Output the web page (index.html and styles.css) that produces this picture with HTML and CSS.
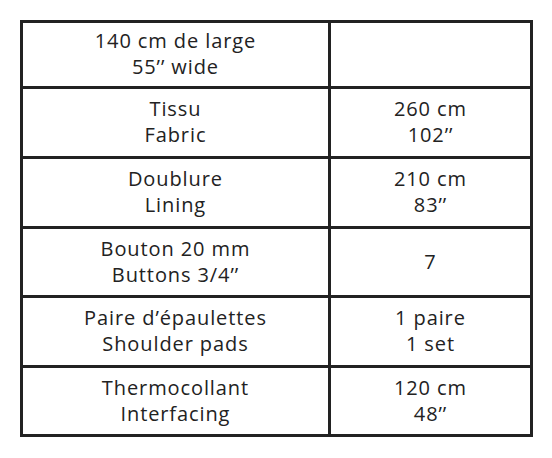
FILE: index.html
```html
<!DOCTYPE html>
<html lang="fr">
<head>
<meta charset="utf-8">
<title>Fournitures</title>
<link rel="stylesheet" href="styles.css">
</head>
<body>
<div class="grid">
  <div class="cell">140 cm de large<br>55’’ wide</div>
  <div class="cell"></div>
  <div class="cell">Tissu<br>Fabric</div>
  <div class="cell">260 cm<br>102’’</div>
  <div class="cell">Doublure<br>Lining</div>
  <div class="cell">210 cm<br>83’’</div>
  <div class="cell">Bouton 20 mm<br>Buttons 3/4’’</div>
  <div class="cell">7</div>
  <div class="cell">Paire d’épaulettes<br>Shoulder pads</div>
  <div class="cell">1 paire<br>1 set</div>
  <div class="cell">Thermocollant<br>Interfacing</div>
  <div class="cell">120 cm<br>48’’</div>
</div>
</body>
</html>
```
FILE: styles.css
```css
html, body {
  margin: 0;
  padding: 0;
  background: #ffffff;
}
body {
  padding: 19.5px 0 0 19.5px;
}
.grid {
  display: grid;
  grid-template-columns: 308px 202px;
  grid-template-rows: 66px 70px 70px 69px 70px 69px;
  width: max-content;
  border-top: 3px solid #222222;
  border-left: 3px solid #222222;
  font-family: "Open Sans", "DejaVu Sans", sans-serif;
  font-size: 20px;
  letter-spacing: 0.9px;
  line-height: 26px;
  color: #222222;
}
.cell {
  box-sizing: border-box;
  border-right: 3px solid #222222;
  border-bottom: 3px solid #222222;
  display: flex;
  align-items: center;
  justify-content: center;
  text-align: center;
  padding-left: 0.9px;
}
```
